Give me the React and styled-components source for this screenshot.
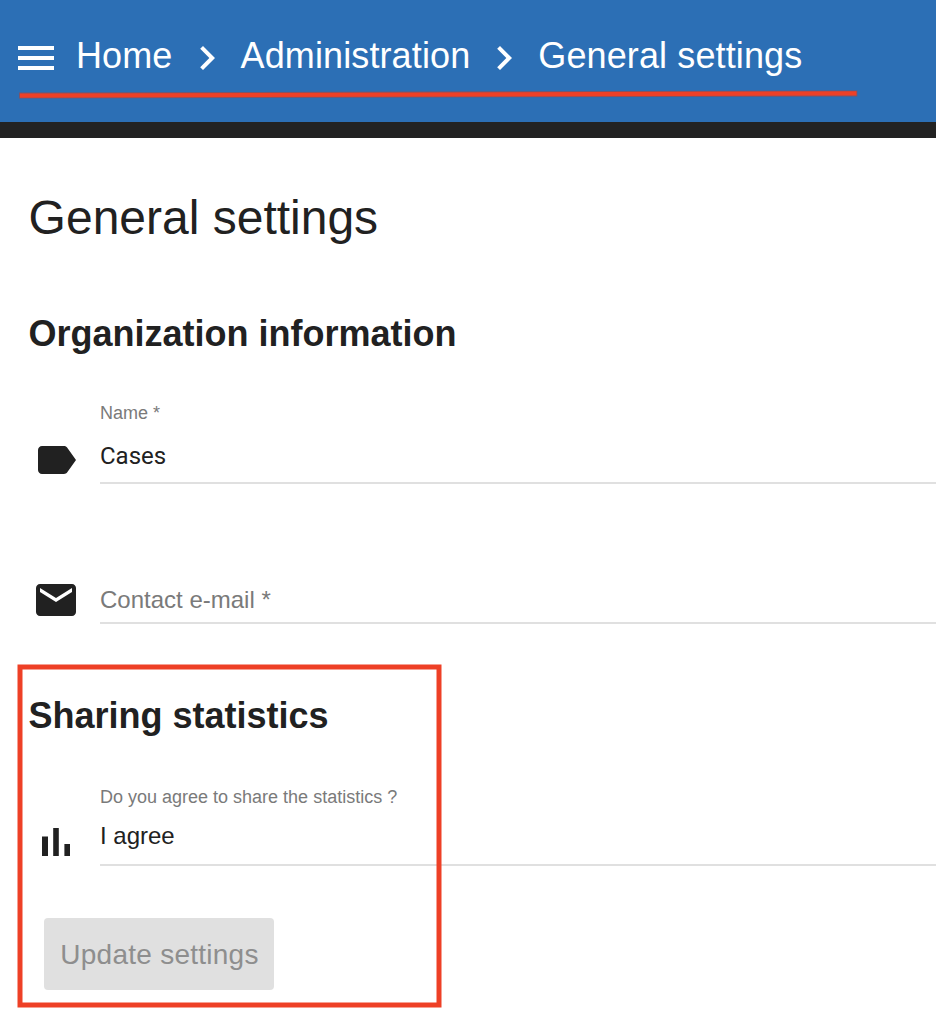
import React from "react";
import styled, { createGlobalStyle } from "styled-components";

const GlobalStyle = createGlobalStyle`
  *, *::before, *::after { box-sizing: border-box; }
  body { margin: 0; background: #fff; color: #212121; font-family: "Liberation Sans", Arial, sans-serif; }
  h1, h2, p { margin: 0; }
`;

const Page = styled.div`
  position: relative;
  width: 100%;
  height: 1030px;
  overflow: hidden;
`;

const Toolbar = styled.header`
  display: flex;
  align-items: flex-start;
  height: 138px;
  padding: 34px 0 0 12px;
  background: #2c6fb5;
  border-bottom: 16px solid #222;
  color: #fff;
`;

const Icon = styled.svg`
  display: block;
  flex: none;
  width: 48px;
  height: 48px;
  fill: currentColor;
`;

const Breadcrumbs = styled.nav`
  display: flex;
  padding-left: 16px;
  gap: 10px;
`;

const Crumb = styled.span`
  font-size: 36px;
  line-height: 44px;
  letter-spacing: 0.12px;
  white-space: nowrap;
`;

const Content = styled.main`
  padding: 52px 0 0 28px;
`;

const Title = styled.h1`
  padding-left: 0.6px;
  font-size: 48px;
  font-weight: 400;
  line-height: 56px;
`;

const SectionTitle = styled.h2`
  margin-top: ${(p) => p.$top}px;
  padding-left: 0.5px;
  font-size: 36px;
  font-weight: 700;
  line-height: 44px;
`;

const FieldRow = styled.div`
  display: flex;
  align-items: flex-end;
  gap: 20px;
  height: ${(p) => p.$height}px;
  margin-top: ${(p) => p.$top}px;
  padding-left: 4px;
`;

const Field = styled.div`
  flex: 1;
  display: flex;
  flex-direction: column;
  border-bottom: 2px solid #e0e0e0;
  padding-bottom: ${(p) => p.$bottom}px;
`;

const Label = styled.p`
  margin-bottom: ${(p) => p.$gap}px;
  font-size: 18px;
  line-height: 22px;
  color: #7a7a7a;
`;

const Value = styled.p`
  font-size: 24px;
  line-height: 28px;
  color: ${(p) => (p.$placeholder ? "#7a7a7a" : "#212121")};
  font-family: ${(p) => (p.$input ? "Roboto, sans-serif" : "inherit")};
`;

const UpdateButton = styled.button`
  display: block;
  width: 230px;
  height: 72px;
  margin: 52px 0 0 16px;
  padding: 1px 0 0 1px;
  border: 0;
  border-radius: 4px;
  background: #e0e0e0;
  color: #8e8e8e;
  font: 400 28px/72px "Liberation Sans", Arial, sans-serif;
  letter-spacing: 0.25px;
  white-space: nowrap;
`;

const Markup = styled.svg`
  position: absolute;
  inset: 0;
  pointer-events: none;
`;

const MENU = "M3 18h18v-2H3v2zm0-5h18v-2H3v2zm0-7v2h18V6H3z";
const CHEVRON = "M10 6L8.59 7.41 13.17 12l-4.58 4.59L10 18l6-6z";
const LABEL =
  "M17.63 5.84C17.27 5.33 16.67 5 16 5L5 5.01C3.9 5.01 3 5.9 3 7v10c0 1.1.9 1.99 2 1.99L16 19c.67 0 1.27-.33 1.63-.84L22 12l-4.37-6.16z";
const MAIL =
  "M20 4H4c-1.1 0-1.99.9-1.99 2L2 18c0 1.1.9 2 2 2h16c1.1 0 2-.9 2-2V6c0-1.1-.9-2-2-2zm0 4l-8 5-8-5V6l8 5 8-5v2z";
const CHART = "M5 9.2h3V19H5V9.2zM10.6 5h2.8v14h-2.8V5zm5.6 8H19v6h-2.8v-6z";

const Glyph = ({ d }) => (
  <Icon viewBox="0 0 24 24">
    <path d={d} />
  </Icon>
);

export default function App() {
  return (
    <Page>
      <GlobalStyle />
      <Toolbar>
        <Glyph d={MENU} />
        <Breadcrumbs>
          <Crumb>Home</Crumb>
          <Glyph d={CHEVRON} />
          <Crumb>Administration</Crumb>
          <Glyph d={CHEVRON} />
          <Crumb>General settings</Crumb>
        </Breadcrumbs>
      </Toolbar>
      <Content>
        <Title>General settings</Title>
        <SectionTitle $top={66}>Organization information</SectionTitle>
        <FieldRow $top={46} $height={82}>
          <Glyph d={LABEL} />
          <Field $bottom={12}>
            <Label $gap={18}>Name *</Label>
            <Value $input>Cases</Value>
          </Field>
        </FieldRow>
        <FieldRow $top={92} $height={48}>
          <Glyph d={MAIL} />
          <Field $bottom={8}>
            <Value $placeholder>Contact e-mail *</Value>
          </Field>
        </FieldRow>
        <SectionTitle $top={70}>Sharing statistics</SectionTitle>
        <FieldRow $top={48} $height={80}>
          <Glyph d={CHART} />
          <Field $bottom={14}>
            <Label $gap={14}>Do you agree to share the statistics ?</Label>
            <Value>I agree</Value>
          </Field>
        </FieldRow>
        <UpdateButton disabled>Update settings</UpdateButton>
      </Content>
      <Markup width="936" height="1030" viewBox="0 0 936 1030" fill="none">
        <path d="M19 95.6L857.3 93.4" stroke="#7d5468" strokeWidth="6" />
        <path d="M20 95.6L856.5 93.4" stroke="#ee4026" strokeWidth="4.2" />
        <rect x="20" y="667" width="419" height="338" stroke="#ee4026" strokeWidth="5" />
      </Markup>
    </Page>
  );
}
